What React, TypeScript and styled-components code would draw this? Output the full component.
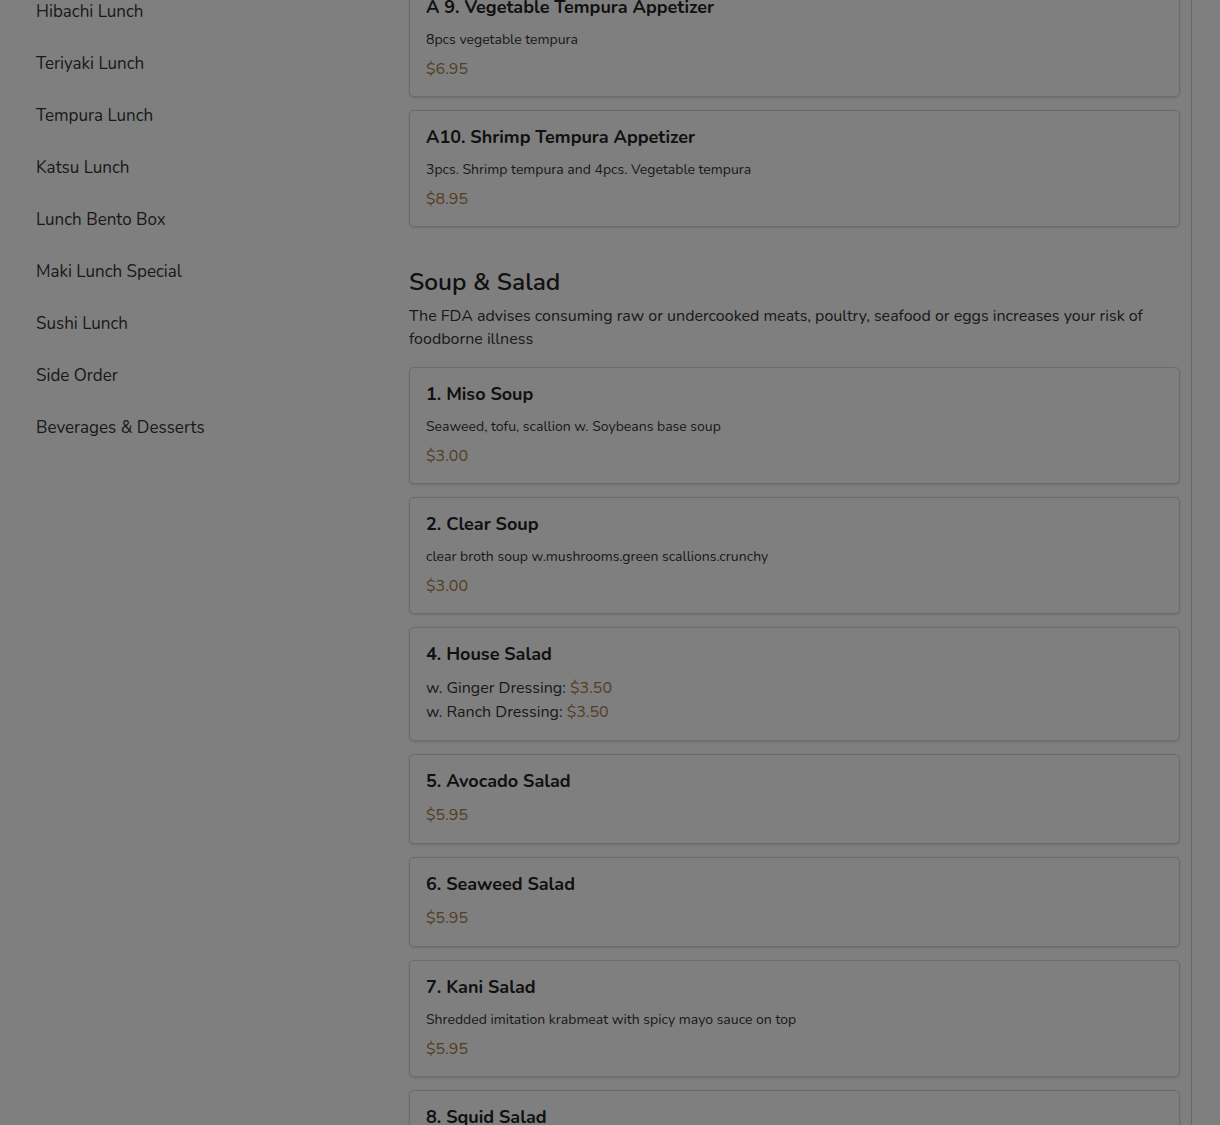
import React from "react";
import styled, { createGlobalStyle } from "styled-components";

const Global = createGlobalStyle`
  html, body { margin: 0; padding: 0; background: #ffffff; }
  body { font-family: "Nunito", "Lato", "Noto Sans", sans-serif; color: #333; overflow: hidden; }
  * { box-sizing: border-box; }
`;

const Page = styled.div`
  display: grid;
  grid-template-columns: 409px 783px 1fr;
  height: 1125px;
`;

const Sidebar = styled.nav`
  display: flex;
  flex-direction: column;
  padding: 0 0 0 36px;
  margin-top: -14px;
`;

const NavItem = styled.div`
  font-size: 17px;
  line-height: 24px;
  padding: 14px 0;
  color: #333;
`;

const Main = styled.main`
  display: flex;
  flex-direction: column;
  gap: 13px;
  padding-right: 11px;
  border-right: 1px solid #cfcfcf;
  margin-top: -20px;
`;

const Card = styled.div`
  border: 1px solid #d6d6d6;
  border-radius: 5px;
  padding: 14px 16px 16px;
  background: #fff;
  box-shadow: 0 1px 3px rgba(0, 0, 0, 0.14);
`;

const Title = styled.div`
  font-size: 18px;
  font-weight: 700;
  line-height: 24px;
  color: #222;
`;

const Desc = styled.div`
  font-size: 14px;
  line-height: 24px;
  margin-top: 9px;
  color: #333;
`;

const Price = styled.div<{ $afterDesc?: boolean }>`
  font-size: 16px;
  line-height: 24px;
  margin-top: ${(p) => (p.$afterDesc ? "5px" : "10px")};
  margin-bottom: ${(p) => (p.$afterDesc ? "-1px" : "0")};
  color: #a67c45;
`;

const Options = styled.div`
  margin-top: 10px;
  display: flex;
  flex-direction: column;
`;

const Option = styled.div`
  font-size: 16px;
  line-height: 24px;
  color: #333;
`;

const OptPrice = styled.span`
  color: #a67c45;
`;

const Section = styled.section`
  display: flex;
  flex-direction: column;
  margin-top: 26px;
  margin-bottom: 3px;
`;

const SectionTitle = styled.h2`
  margin: 0;
  font-size: 24.5px;
  font-weight: 600;
  line-height: 32px;
  color: #222;
`;

const SectionNote = styled.p`
  margin: 7px 0 0;
  font-size: 16px;
  line-height: 23px;
  color: #333;
`;

const Overlay = styled.div`
  position: fixed;
  inset: 0;
  background: rgba(0, 0, 0, 0.5);
  pointer-events: none;
`;

const nav = [
  "Hibachi Lunch",
  "Teriyaki Lunch",
  "Tempura Lunch",
  "Katsu Lunch",
  "Lunch Bento Box",
  "Maki Lunch Special",
  "Sushi Lunch",
  "Side Order",
  "Beverages & Desserts",
];

type Item = { title: string; desc?: string; price?: string; options?: [string, string][] };

const before: Item[] = [
  { title: "A 9. Vegetable Tempura Appetizer", desc: "8pcs vegetable tempura", price: "$6.95" },
  { title: "A10. Shrimp Tempura Appetizer", desc: "3pcs. Shrimp tempura and 4pcs. Vegetable tempura", price: "$8.95" },
];

const soup: Item[] = [
  { title: "1. Miso Soup", desc: "Seaweed, tofu, scallion w. Soybeans base soup", price: "$3.00" },
  { title: "2. Clear Soup", desc: "clear broth soup w.mushrooms.green scallions.crunchy", price: "$3.00" },
  { title: "4. House Salad", options: [["w. Ginger Dressing: ", "$3.50"], ["w. Ranch Dressing: ", "$3.50"]] },
  { title: "5. Avocado Salad", price: "$5.95" },
  { title: "6. Seaweed Salad", price: "$5.95" },
  { title: "7. Kani Salad", desc: "Shredded imitation krabmeat with spicy mayo sauce on top", price: "$5.95" },
  { title: "8. Squid Salad", desc: "Marinated squid salad", price: "$5.95" },
];

const MenuCard = ({ item }: { item: Item }) => (
  <Card>
    <Title>{item.title}</Title>
    {item.desc && <Desc>{item.desc}</Desc>}
    {item.options && (
      <Options>
        {item.options.map(([l, p]) => (
          <Option key={l}>
            {l}
            <OptPrice>{p}</OptPrice>
          </Option>
        ))}
      </Options>
    )}
    {item.price && <Price $afterDesc={!!item.desc}>{item.price}</Price>}
  </Card>
);

export default function App() {
  return (
    <>
      <Global />
      <Page>
        <Sidebar>
          {nav.map((n) => (
            <NavItem key={n}>{n}</NavItem>
          ))}
        </Sidebar>
        <Main>
          {before.map((i) => (
            <MenuCard key={i.title} item={i} />
          ))}
          <Section>
            <SectionTitle>Soup &amp; Salad</SectionTitle>
            <SectionNote>
              The FDA advises consuming raw or undercooked meats, poultry, seafood or eggs increases your risk of
              foodborne illness
            </SectionNote>
          </Section>
          {soup.map((i) => (
            <MenuCard key={i.title} item={i} />
          ))}
        </Main>
        <div />
      </Page>
      <Overlay />
    </>
  );
}
